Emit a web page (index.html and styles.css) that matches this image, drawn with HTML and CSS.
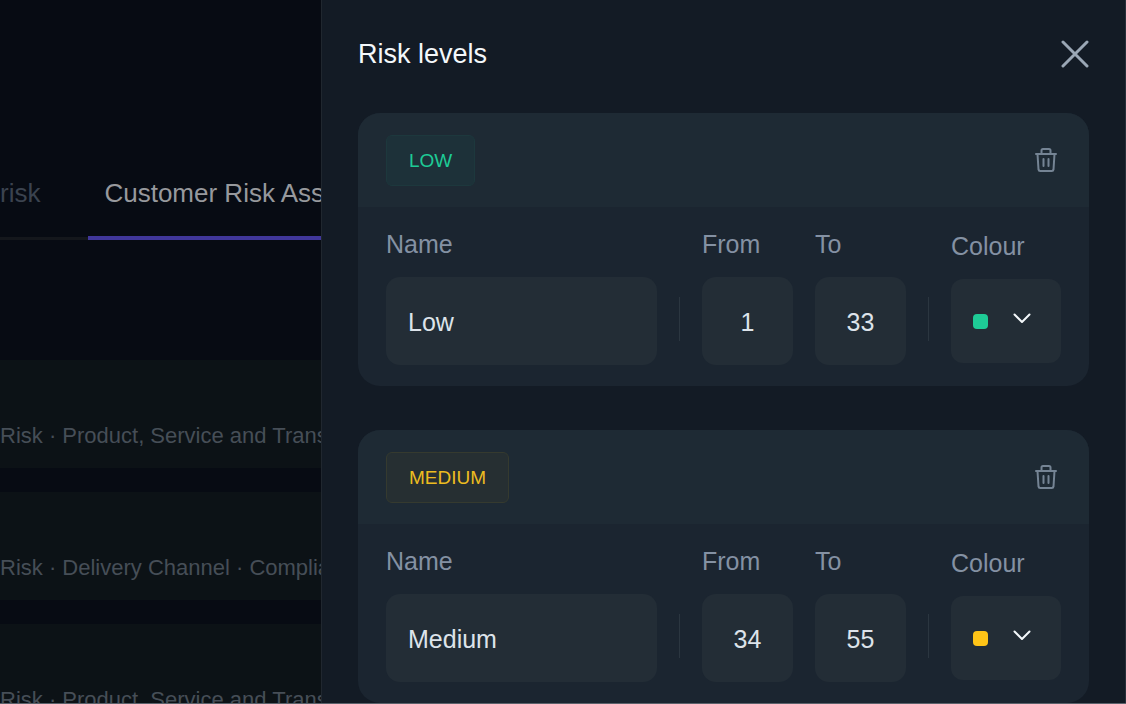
FILE: index.html
```html
<!DOCTYPE html>
<html lang="en">
<head>
    <meta charset="UTF-8">
    <meta name="viewport" content="width=device-width, initial-scale=1.0">
    <title>Risk levels</title>
    <link rel="stylesheet" href="styles.css">
</head>
<body>
    <div class="layout">
        <main class="page">
            <nav class="tabs">
                <a class="tab" href="#risk">risk</a>
                <a class="tab active" href="#customer">Customer Risk Assessment</a>
            </nav>
            <ul class="factors">
                <li class="factor">Risk · Product, Service and Transaction</li>
                <li class="factor">Risk · Delivery Channel · Compliance</li>
                <li class="factor">Risk · Product, Service and Transaction</li>
            </ul>
        </main>

        <aside class="drawer">
            <header class="drawer-header">
                <h1>Risk levels</h1>
                <button class="icon-button" type="button" aria-label="Close">
                    <svg class="close-icon" viewBox="0 0 28 28">
                        <path d="M2 2L26 26M26 2L2 26"/>
                    </svg>
                </button>
            </header>

            <section class="level">
                <div class="level-header">
                    <span class="badge low">LOW</span>
                    <button class="icon-button" type="button" aria-label="Delete low level">
                        <svg class="trash-icon" viewBox="0 0 24 26">
                            <path d="M2 7H22M7.500 7V3.500Q7.500 2 9 2H15Q16.500 2 16.500 3.500V7M3.500 7L4.500 22.500Q4.700 24 6.200 24H17.800Q19.300 24 19.500 22.500L20.500 7M9.500 12V19M14.500 12V19"/>
                        </svg>
                    </button>
                </div>
                <div class="level-body">
                    <div class="field name">
                        <label for="low-name">Name</label>
                        <input id="low-name" type="text" value="Low">
                    </div>
                    <div class="divider"></div>
                    <div class="field number">
                        <label for="low-from">From</label>
                        <input id="low-from" type="text" inputmode="numeric" value="1">
                    </div>
                    <div class="field number">
                        <label for="low-to">To</label>
                        <input id="low-to" type="text" inputmode="numeric" value="33">
                    </div>
                    <div class="divider"></div>
                    <div class="field colour">
                        <label for="low-colour">Colour</label>
                        <div class="colour-box">
                            <span class="swatch low"></span>
                            <svg class="chevron" viewBox="0 0 18 11">
                                <path d="M1.500 1.500L9 9L16.500 1.500"/>
                            </svg>
                            <select id="low-colour">
                                <option value="green" aria-label="Green"></option>
                                <option value="yellow" aria-label="Yellow"></option>
                            </select>
                        </div>
                    </div>
                </div>
            </section>

            <section class="level">
                <div class="level-header">
                    <span class="badge medium">MEDIUM</span>
                    <button class="icon-button" type="button" aria-label="Delete medium level">
                        <svg class="trash-icon" viewBox="0 0 24 26">
                            <path d="M2 7H22M7.500 7V3.500Q7.500 2 9 2H15Q16.500 2 16.500 3.500V7M3.500 7L4.500 22.500Q4.700 24 6.200 24H17.800Q19.300 24 19.500 22.500L20.500 7M9.500 12V19M14.500 12V19"/>
                        </svg>
                    </button>
                </div>
                <div class="level-body">
                    <div class="field name">
                        <label for="medium-name">Name</label>
                        <input id="medium-name" type="text" value="Medium">
                    </div>
                    <div class="divider"></div>
                    <div class="field number">
                        <label for="medium-from">From</label>
                        <input id="medium-from" type="text" inputmode="numeric" value="34">
                    </div>
                    <div class="field number">
                        <label for="medium-to">To</label>
                        <input id="medium-to" type="text" inputmode="numeric" value="55">
                    </div>
                    <div class="divider"></div>
                    <div class="field colour">
                        <label for="medium-colour">Colour</label>
                        <div class="colour-box">
                            <span class="swatch medium"></span>
                            <svg class="chevron" viewBox="0 0 18 11">
                                <path d="M1.500 1.500L9 9L16.500 1.500"/>
                            </svg>
                            <select id="medium-colour">
                                <option value="yellow" aria-label="Yellow"></option>
                                <option value="green" aria-label="Green"></option>
                            </select>
                        </div>
                    </div>
                </div>
            </section>
        </aside>
    </div>
</body>
</html>
```
FILE: styles.css
```css
* {
    box-sizing: border-box;
}
body {
    margin: 0;
    font-family: "Liberation Sans", Arial, sans-serif;
    font-size: 25px;
    line-height: 30px;
    color: #dde3ea;
    background-color: #070b13;
}
.layout {
    display: flex;
    height: 100vh;
    border-bottom: 1px solid #5b626b;
    overflow: hidden;
}

/* page behind the drawer */
.page {
    flex: 1;
    min-width: 0;
    overflow: hidden;
    white-space: nowrap;
}
.tabs {
    display: flex;
    margin-top: 178px;
}
.tab {
    flex-shrink: 0;
    font-size: 26px;
    color: #3b434f;
    text-decoration: none;
    padding-right: 48px;
    padding-bottom: 28px;
    border-bottom: 3px solid #14171c;
}
.tab.active {
    color: #97999d;
    padding: 0 16px 28px;
    border-bottom: 4px solid #40379a;
}
.factors {
    list-style: none;
    display: flex;
    flex-direction: column;
    gap: 24px;
    margin: 120px 0 0;
    padding: 0;
}
.factor {
    padding: 61px 0 17px;
    font-size: 22px;
    color: #464e57;
    background-color: #0c1216;
}

/* drawer */
.drawer {
    width: 805px;
    flex-shrink: 0;
    display: flex;
    flex-direction: column;
    gap: 44px;
    padding: 39px 36px 0;
    background-color: #131b25;
    border-left: 1px solid #20272f;
    border-right: 1px solid #28303a;
    overflow: hidden;
}
.drawer-header {
    display: flex;
    justify-content: space-between;
    align-items: center;
}
h1 {
    margin: 0;
    font-size: 27px;
    font-weight: normal;
    color: #f4f8fb;
}
.icon-button {
    display: flex;
    padding: 0;
    border: none;
    background: none;
    cursor: pointer;
}
svg {
    fill: none;
    stroke: currentColor;
    stroke-linecap: round;
    stroke-linejoin: round;
}
.close-icon {
    width: 28px;
    height: 28px;
    stroke-width: 3;
    color: #9aa7b5;
}
.trash-icon {
    width: 24px;
    height: 26px;
    stroke-width: 2;
    color: #758494;
}

.level {
    flex-shrink: 0;
    border-radius: 22px;
    background-color: #1b2530;
    overflow: hidden;
}
.level-header {
    display: flex;
    justify-content: space-between;
    align-items: center;
    height: 94px;
    padding: 0 31px 0 28px;
    background-color: #1e2a34;
}
.badge {
    padding: 10px 22px 9px;
    font-size: 19px;
    border: 1px solid;
    border-radius: 6px;
}
.badge.low {
    color: #1ecb96;
    background-color: #1d3139;
    border-color: #1d383d;
}
.badge.medium {
    color: #edbc20;
    background-color: #262f32;
    border-color: #353a2f;
}
.level-body {
    display: flex;
    align-items: center;
    gap: 22px;
    padding: 22px 28px 21px;
}
.field {
    display: flex;
    flex-direction: column;
    gap: 18px;
}
.field.name {
    flex: 1;
    min-width: 0;
}
.field.number {
    width: 91px;
}
.field.colour {
    width: 110px;
}
label {
    color: #8491a3;
}
input {
    width: 100%;
    height: 88px;
    padding: 2px 22px 0;
    font: inherit;
    color: #dde3ea;
    background-color: #232d36;
    border: none;
    border-radius: 14px;
}
.number input {
    padding: 2px 0 0;
    text-align: center;
}
.divider {
    width: 1px;
    height: 44px;
    margin-top: 44px;
    background-color: #2b3640;
}
.colour-box {
    position: relative;
    display: flex;
    align-items: center;
    gap: 25px;
    height: 84px;
    padding-left: 22px;
    background-color: #232d36;
    border-radius: 12px;
}
.colour-box select {
    position: absolute;
    inset: 0;
    width: 100%;
    appearance: none;
    background: none;
    border: none;
    border-radius: 12px;
    cursor: pointer;
}
.swatch {
    width: 15px;
    height: 15px;
    border-radius: 4px;
}
.swatch.low {
    background-color: #1ecb96;
}
.swatch.medium {
    background-color: #ffc417;
}
.chevron {
    width: 18px;
    height: 11px;
    margin-bottom: 6px;
    stroke-width: 2;
    color: #f4f8fb;
}
```
